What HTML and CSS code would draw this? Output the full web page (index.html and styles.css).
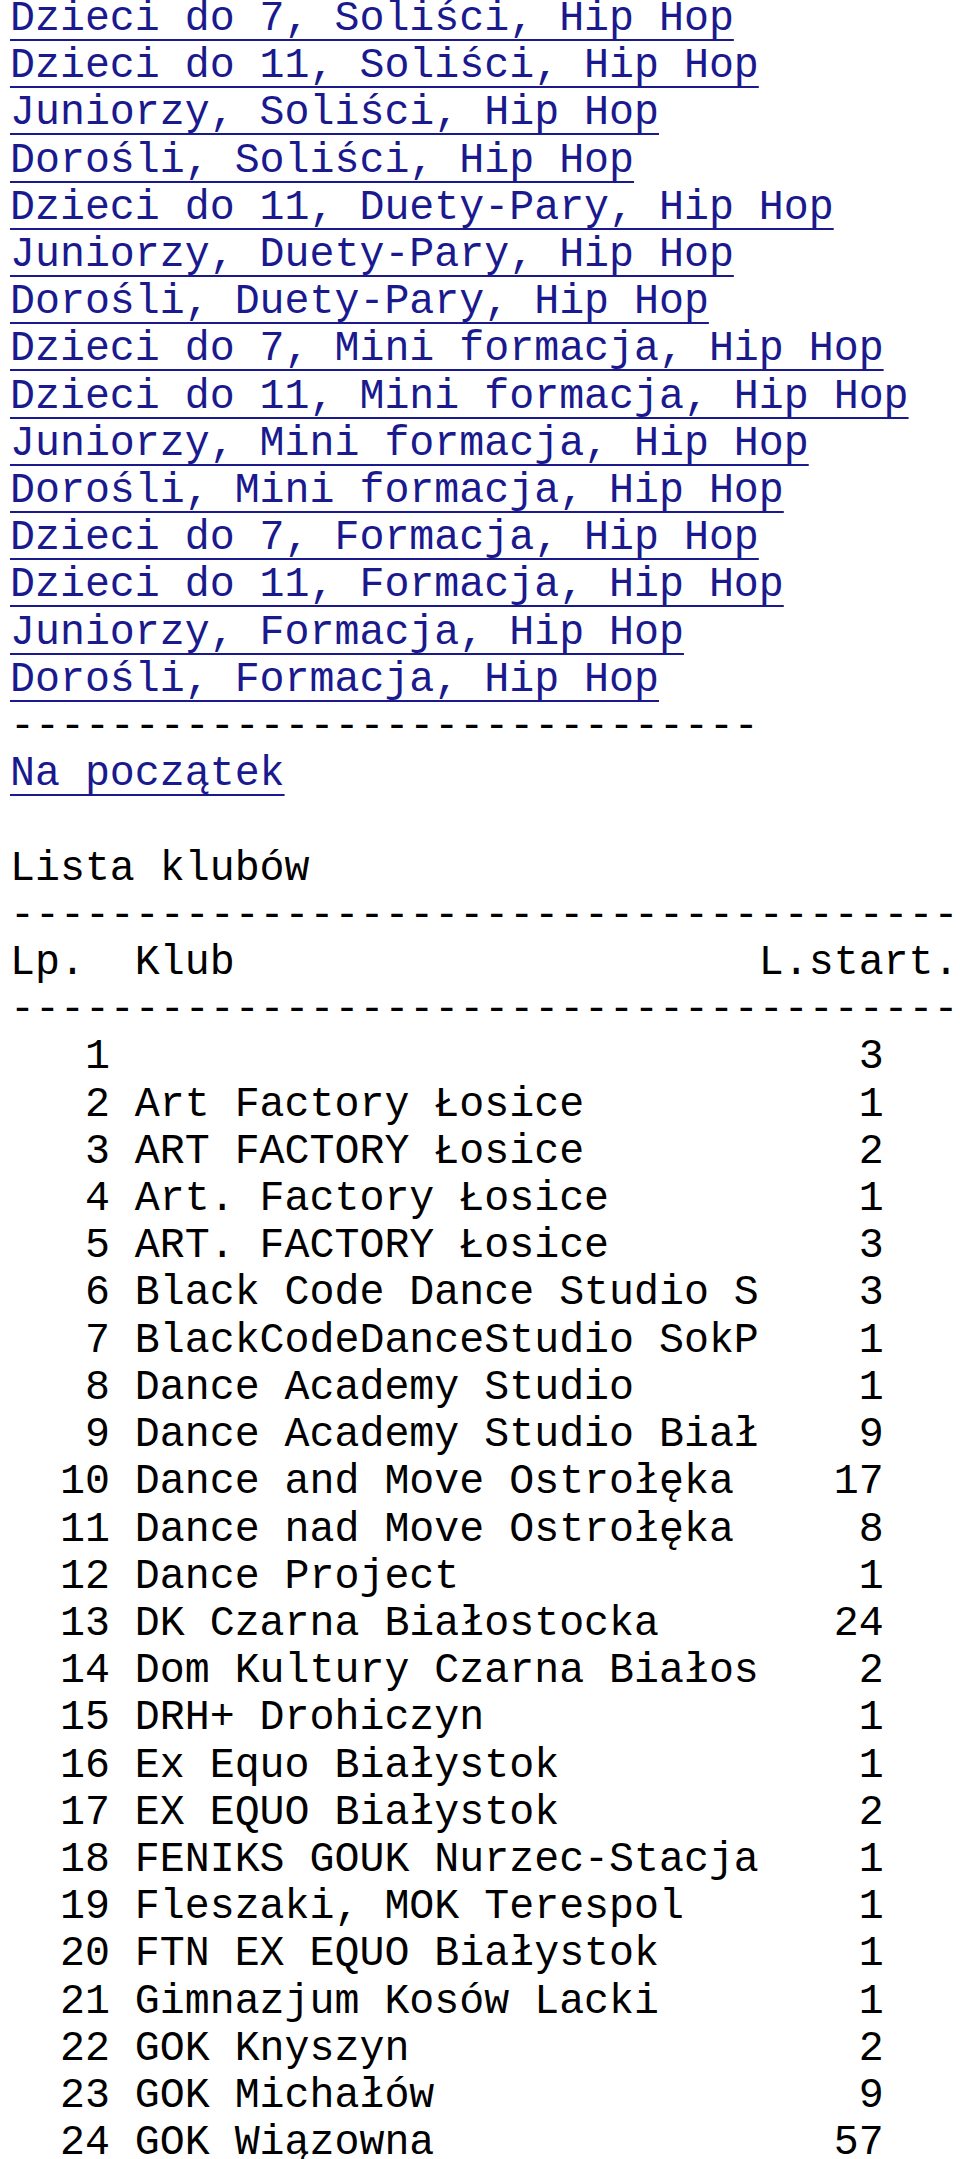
FILE: index.html
```html
<!DOCTYPE html>
<html lang="pl">
<head>
<meta charset="utf-8">
<title>Lista klubów</title>
<link rel="stylesheet" href="styles.css">
</head>
<body>
<pre class="listing"><a href="#">Dzieci do 7, Soliści, Hip Hop</a>
<a href="#">Dzieci do 11, Soliści, Hip Hop</a>
<a href="#">Juniorzy, Soliści, Hip Hop</a>
<a href="#">Dorośli, Soliści, Hip Hop</a>
<a href="#">Dzieci do 11, Duety-Pary, Hip Hop</a>
<a href="#">Juniorzy, Duety-Pary, Hip Hop</a>
<a href="#">Dorośli, Duety-Pary, Hip Hop</a>
<a href="#">Dzieci do 7, Mini formacja, Hip Hop</a>
<a href="#">Dzieci do 11, Mini formacja, Hip Hop</a>
<a href="#">Juniorzy, Mini formacja, Hip Hop</a>
<a href="#">Dorośli, Mini formacja, Hip Hop</a>
<a href="#">Dzieci do 7, Formacja, Hip Hop</a>
<a href="#">Dzieci do 11, Formacja, Hip Hop</a>
<a href="#">Juniorzy, Formacja, Hip Hop</a>
<a href="#">Dorośli, Formacja, Hip Hop</a>
------------------------------
<a href="#">Na początek</a>

Lista klubów
--------------------------------------
Lp.  Klub                     L.start.
--------------------------------------
   1                              3
   2 Art Factory Łosice           1
   3 ART FACTORY Łosice           2
   4 Art. Factory Łosice          1
   5 ART. FACTORY Łosice          3
   6 Black Code Dance Studio S    3
   7 BlackCodeDanceStudio SokP    1
   8 Dance Academy Studio         1
   9 Dance Academy Studio Biał    9
  10 Dance and Move Ostrołęka    17
  11 Dance nad Move Ostrołęka     8
  12 Dance Project                1
  13 DK Czarna Białostocka       24
  14 Dom Kultury Czarna Białos    2
  15 DRH+ Drohiczyn               1
  16 Ex Equo Białystok            1
  17 EX EQUO Białystok            2
  18 FENIKS GOUK Nurzec-Stacja    1
  19 Fleszaki, MOK Terespol       1
  20 FTN EX EQUO Białystok        1
  21 Gimnazjum Kosów Lacki        1
  22 GOK Knyszyn                  2
  23 GOK Michałów                 9
  24 GOK Wiązowna                57
</pre>
</body>
</html>
```
FILE: styles.css
```css
html {
  background: #ffffff;
}

body {
  margin: 0 0 0 10px;
  background: #ffffff;
  color: #000000;
}

.listing {
  margin: -5px 0 0 0;
  font-family: "Courier New", "Nimbus Mono PS", "Nimbus Mono L", "FreeMono", "Liberation Mono", monospace;
  font-size: 41.6px;
  line-height: 47.2px;
  color: #000000;
}

.listing a {
  color: #1a1a8e;
  text-decoration: underline;
  text-decoration-thickness: 2px;
  text-decoration-skip-ink: none;
  text-underline-offset: 9px;
}
```
